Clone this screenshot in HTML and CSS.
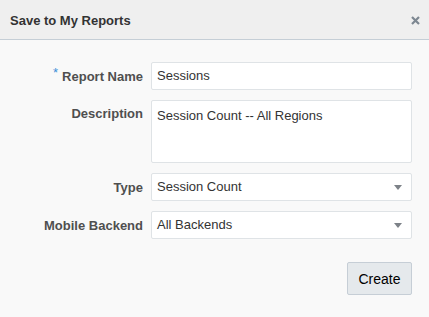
FILE: index.html
```html
<!DOCTYPE html>
<html lang="en">
<head>
  <meta charset="UTF-8">
  <title>Save to My Reports</title>
  <link rel="stylesheet" href="styles.css">
</head>
<body>
  <!-- dialog -->
  <div class="dialog">
    <div class="dlg-head">
      <h1 class="dlg-title">Save to My Reports</h1>
      <button class="dlg-close" aria-label="Close">
        <svg width="9" height="9" viewBox="0 0 9 9"><path d="M1 1L8 8M8 1L1 8" stroke="#7d8791" stroke-width="2.2"/></svg>
      </button>
    </div>

    <div class="dlg-body">
      <form class="form">
        <label class="lbl"><span class="req">*</span>Report Name</label>
        <div class="field">Sessions</div>

        <label class="lbl lbl-top">Description</label>
        <div class="field area">Session Count -- All Regions</div>

        <label class="lbl">Type</label>
        <div class="field sel">Session Count<span class="arrow"></span></div>

        <label class="lbl">Mobile Backend</label>
        <div class="field sel">All Backends<span class="arrow"></span></div>
      </form>

      <div class="btns">
        <button class="btn">Create</button>
      </div>
    </div>
  </div>
</body>
</html>
```

FILE: styles.css
```css
html, body{
  margin: 0;
  padding: 0;
}

body{
  width: 429px;
  height: 317px;
  overflow: hidden;
  background-color: #f9f9f9;
  font-family: "Liberation Sans", Arial, sans-serif;
}

/* header */
.dlg-head{
  height: 39px;
  display: flex;
  align-items: center;
  justify-content: space-between;
  padding: 0 9px 0 10px;
  background-color: #efefef;
  border-bottom: 1px solid #c5ced6;
}
.dlg-title{
  margin: 0;
  font-size: 13px;
  font-weight: bold;
  color: #333;
  padding-top: 1px;
}
.dlg-close{
  border: none;
  background: transparent;
  padding: 0;
  width: 9px;
  height: 9px;
  display: flex;
  margin-top: 1px;
}

/* body */
.dlg-body{
  padding: 22px 17px 0 0;
}

.form{
  display: grid;
  grid-template-columns: 143px 261px;
  column-gap: 8px;
  row-gap: 10px;
}

.lbl{
  font-size: 13px;
  font-weight: bold;
  color: #4f4f4f;
  text-align: right;
  align-self: center;
}
.lbl-top{
  align-self: start;
  padding-top: 6px;
}
.req{
  color: #3c8fd8;
  font-weight: normal;
  font-size: 13px;
  position: relative;
  top: -4px;
  margin-right: 4px;
}

.field{
  box-sizing: border-box;
  height: 28px;
  padding: 0 5px;
  line-height: 26px;
  font-size: 13px;
  color: #333;
  background-color: #fff;
  border: 1px solid #dfe3e6;
  border-radius: 2px;
}
.area{
  height: 63px;
  line-height: 16px;
  padding-top: 7px;
}
.sel{
  display: flex;
  justify-content: space-between;
  align-items: center;
  padding-right: 9px;
}
.arrow{
  width: 0;
  height: 0;
  border-left: 4px solid transparent;
  border-right: 4px solid transparent;
  border-top: 5px solid #7d8288;
  margin-top: 1px;
}

/* button */
.btns{
  display: flex;
  justify-content: flex-end;
  margin-top: 23px;
}
.btn{
  box-sizing: border-box;
  width: 65px;
  height: 33px;
  font-family: "Liberation Sans", Arial, sans-serif;
  font-size: 14px;
  color: #000;
  background-color: #e5e9ec;
  border: 1px solid #c6ced6;
  border-radius: 2px;
  padding: 0;
}
```
